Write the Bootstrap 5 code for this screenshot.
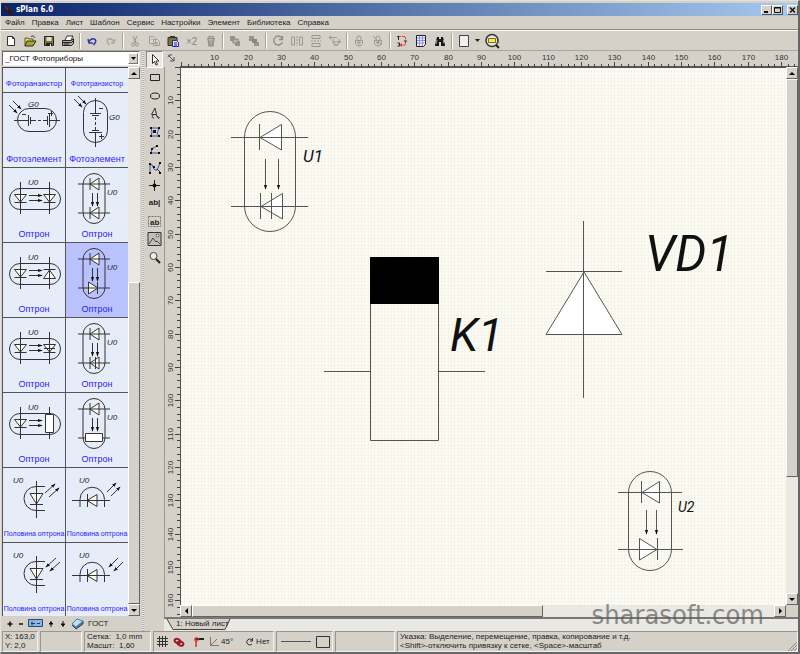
<!DOCTYPE html>
<html lang="ru">
<head>
<meta charset="utf-8">
<meta name="viewport" content="width=device-width, initial-scale=1">
<title>sPlan 6.0</title>
<link rel="stylesheet" href="https://cdn.jsdelivr.net/npm/bootstrap@5.3.0/dist/css/bootstrap.min.css">
<style>
:root{--face:#d5d1c9;--shade:#8b8883;--hi:#fbfaf7}
body{background:var(--face);color:#222;font:8px/10px "Liberation Sans",sans-serif}
button{font:inherit;color:inherit;background:none;border:0;padding:0}
svg{display:block;flex:none}
.app-window{border:1px solid #e4e1da;border-right:2px solid #666;border-bottom:2px solid #666}
.title-strip{height:13px;margin-top:2px;background:linear-gradient(90deg,#0a246a,#a6caf0);color:#fff;font:bold 8px/12px "DejaVu Sans Condensed",sans-serif}
.win-btn{width:11px;height:10px;background:var(--face);border:1px solid;border-color:#fff #555 #555 #fff}
.menu-strip{height:14px;border-bottom:1px solid var(--shade)}
.menu-strip a{color:#222;text-decoration:none;margin-right:7px}
.tool-strip{height:21px;border-top:1px solid var(--hi);border-bottom:1px solid #aaa7a1}
.tool-strip button{width:19px;height:19px}
.tool-strip .narrow-btn{width:9px}
.split-line{width:5px;height:16px;background:linear-gradient(90deg,transparent 2px,#a5a29c 2px,#a5a29c 3px,#fff 3px,#fff 4px,transparent 4px)}
.side-col{width:139px;padding-left:1px}
.combo-wrap{height:15px;border:1px solid;border-color:#666 #eee #eee #666;margin-bottom:1px}
.combo-wrap select{appearance:none;border:0;border-radius:0;background:#fff;font:inherit;color:#111;height:13px;padding:0 14px 0 2px;width:100%;display:block}
.combo-arrow{right:1px;top:1px;width:10px;height:11px;background:var(--face);border:1px solid;border-color:#fff #777 #777 #fff;pointer-events:none}
.lib-grid{display:grid;grid-template-columns:63px 1fr;grid-template-rows:25px;grid-auto-rows:75px;background:#e6edf8;border-top:1px solid #444}
.lib-grid button{border-left:1px solid #555;border-bottom:1px solid #555;color:#2a22ff;display:flex;flex-direction:column;justify-content:flex-end;align-items:center;padding-bottom:2px;overflow:hidden;font-size:9px;line-height:12px;white-space:nowrap}
.lib-grid .label-sm{font-size:7px}
.lib-grid .label-md{font-size:8px}
.lib-grid .picked{background:#b9c2fd}
.lib-grid svg{width:62px;height:60px}
.bar-v{width:12px;background:#e9e8e3}
.bar-h{height:12px;background:#e9e8e3}
.bar-btn{width:12px;height:12px;flex:none}
.raised{background:var(--face);border:1px solid;border-color:#fff #66645f #66645f #fff}
.grip-col{width:6px;background:repeating-linear-gradient(0deg,#aaa 0 1px,#eee 1px 2px) 2px 0/2px 100% no-repeat}
.tools-col{width:18px}
.tools-col button{width:17px;height:18px}
.tools-col .active-tool{background:#ece9e4;border:1px solid;border-color:#888 #fff #fff #888;height:17px}
.sheet-grid{display:grid;grid-template-columns:16px minmax(0,1fr) 12px;grid-template-rows:16px minmax(0,1fr) 12px}
.sheet-grid svg.fit{width:100%;height:100%}
.across{grid-column:2/4}
.ruler-v{grid-row:2/4;border-left:1px solid #999}
.ruler-font text{font:8px "Liberation Sans",sans-serif;fill:#333;text-anchor:middle}
.sheet-view{border-left:1px solid #555;border-top:1px solid #555;background:#fcfcf4}
.part-name{font-family:Roboto,"Liberation Sans",sans-serif;font-style:italic;fill:#111}
.sym-name{font:italic 8px "Liberation Sans",sans-serif;fill:#222;stroke:none}
.tab-strip{height:14px;background:#e9e8e3;border-top:2px solid #777}
.lib-foot{height:15px}
.status-strip{height:21px;padding-left:1px}
.pane{border:1px solid;border-color:#99968f #f4f2ee #f4f2ee #99968f;margin-right:2px;padding-left:2px;line-height:9px;white-space:pre}
.w-pos{width:36px}.w-blank{width:42px}.w-grid{width:67px}.w-snap{width:121px}.w-line{width:57px}.w-gap{width:60px}
.brand-mark{right:34px;bottom:22px;font:27px/30px "DejaVu Sans Condensed","Open Sans",sans-serif;color:rgba(88,88,88,.68)}
</style>
<script src="https://cdn.jsdelivr.net/npm/bootstrap@5.3.0/dist/js/bootstrap.bundle.min.js"></script>
</head>
<body>
<svg width="0" height="0" class="position-absolute" aria-hidden="true">
<defs>
<marker id="tip" viewBox="0 0 6 6" refX="5" refY="3" markerWidth="5" markerHeight="5" markerUnits="userSpaceOnUse" orient="auto"><path d="M0 1L6 3L0 5z" fill="#111"/></marker>
<pattern id="mm" width="10" height="10" patternUnits="userSpaceOnUse"><path d="M.5 0v10M3.5 0v10M7.5 0v10M0 .5h10M0 3.5h10M0 7.5h10" stroke="#f4f4eb" fill="none"/></pattern>
<g id="ledL"><path d="M24 16L33 10V22z" fill="#fffdf0"/><path d="M24 10v12M12 16h32"/></g>
<g id="vcap"><rect x="17" y="5.500" width="22" height="50" rx="11" fill="none"/><use href="#ledL"/><path d="M26.500 25v13" marker-end="url(#tip)"/><path d="M31.500 25v13" marker-end="url(#tip)"/><text x="41" y="27" class="sym-name">U0</text></g>
<g id="ledD"><path d="M11.500 26.500h12L17.500 34z" fill="#fffdf0"/><path d="M11.500 34.500h12M17.500 14v32"/></g>
<g id="hcap"><rect x="6.500" y="20.500" width="51" height="21" rx="10.500" fill="none"/><use href="#ledD"/><path d="M26 27.500h13" marker-end="url(#tip)"/><path d="M26 32.500h13" marker-end="url(#tip)"/><text x="25" y="17" class="sym-name">U0</text></g>
<g id="halfV"><path d="M42 18.500H33A12 12 0 0 0 33 42.500H42M33.500 13v37" fill="none"/><path d="M27 25.500h13L33.500 36z" fill="#fffdf0"/><path d="M27 36.500h13M33.500 13v37"/><text x="10" y="15" class="sym-name">U0</text></g>
<g id="halfH"><path d="M14 39V31.500A12 12 0 0 1 38.500 31.500V39M6 32.500h38" fill="none"/><path d="M21 32.500L31 26.500V38.500z" fill="#fffdf0"/><path d="M21.500 26v13M6 32.500h38"/><text x="13" y="15" class="sym-name">U0</text></g>
</defs>
</svg>

<div class="app-window vh-100 d-flex flex-column overflow-hidden position-relative">
  <header class="title-strip d-flex align-items-center flex-shrink-0">
    <svg width="15" height="12" viewBox="0 0 15 12"><path d="M4 2L11 11" stroke="#35180f" stroke-width="3"/><path d="M4 2L7 6" stroke="#8d4032"/></svg>
    <span class="flex-grow-1">sPlan 6.0</span>
    <button class="win-btn" aria-label="Свернуть"><svg width="9" height="8"><path d="M2 6h4" stroke="#111" stroke-width="2"/></svg></button>
    <button class="win-btn" aria-label="Развернуть"><svg width="9" height="8"><path d="M1.500 1.500h6v5h-6zM1 2h7" stroke="#111" fill="none"/></svg></button>
    <button class="win-btn ms-1" aria-label="Закрыть"><svg width="9" height="8"><path d="M2 1.500l5 5M7 1.500l-5 5" stroke="#111" stroke-width="1.500"/></svg></button>
  </header>
  <nav class="menu-strip d-flex align-items-center flex-shrink-0 ps-1">
    <a href="#">Файл</a><a href="#">Правка</a><a href="#">Лист</a><a href="#">Шаблон</a><a href="#">Сервис</a><a href="#">Настройки</a><a href="#">Элемент</a><a href="#">Библиотека</a><a href="#">Справка</a>
  </nav>
  <div class="tool-strip d-flex align-items-center flex-shrink-0" role="toolbar" id="toolbar">
    <button aria-label="Новый"><svg class="mx-auto" width="14" height="14"><path d="M3.500 2.500h5l2 2v7h-7zM8.500 2.500v2h2" fill="#fff" stroke="#333"/></svg></button>
    <button aria-label="Открыть"><svg class="mx-auto" width="14" height="14"><path d="M2 12V4h3l1 1h4v2" fill="#e6dc72" stroke="#5a5820"/><path d="M2 12l2-5h9l-3 5z" fill="#a8a23a" stroke="#333312"/><path d="M8 3c1-2 3-1 4 1" stroke="#222" fill="none"/></svg></button>
    <button aria-label="Сохранить"><svg class="mx-auto" width="14" height="14"><path d="M2.500 2.500h9v9h-9z" fill="#77772c" stroke="#222"/><path d="M4.500 3h5v4h-5z" fill="#ddd"/><path d="M4 9h6v3H4z" fill="#222"/><path d="M8 10h1v2H8z" fill="#eee"/></svg></button>
    <button aria-label="Печать"><svg class="mx-auto" width="14" height="14"><path d="M4 6l2-4h6l-2 4" fill="#fff" stroke="#333"/><path d="M1.500 6.500h9l2-2v5l-2 2h-9z" fill="#aaa" stroke="#222"/><path d="M2 8.500h8.500l2-2M3 10h5" stroke="#222" fill="none"/></svg></button>
    <span class="split-line"></span>
    <button aria-label="Отменить"><svg class="mx-auto" width="14" height="14"><path d="M3 5l1 4h4M3.500 8.500Q6 4 9 5Q12 6 10 9L8.500 11" fill="none" stroke="#3334aa" stroke-width="1.500"/></svg></button>
    <button aria-label="Вернуть"><svg class="mx-auto" width="14" height="14"><path d="M11 5l-1 4H7M10.500 8.500Q8 4 5 5Q2 6 4 9L5.500 11" fill="none" stroke="#aaa8a3" stroke-width="1.500"/></svg></button>
    <span class="split-line"></span>
    <button aria-label="Вырезать"><svg class="mx-auto" width="14" height="14" fill="none" stroke="#999690"><path d="M5 2l3 7M9 2l-3 7"/><circle cx="5" cy="10.500" r="1.500"/><circle cx="9" cy="10.500" r="1.500"/></svg></button>
    <button aria-label="Копировать"><svg class="mx-auto" width="14" height="14" fill="#ddd9d2" stroke="#a09d97"><path d="M2.500 2.500h4l2 2v5h-6zM6.500 5.500h4l2 2v4h-6zM8 8.500h3M8 10h3M4 5h2"/></svg></button>
    <button aria-label="Вставить"><svg class="mx-auto" width="14" height="14"><path d="M2 3.500h9v8H2z" fill="#77743c" stroke="#33331d"/><path d="M4 2h5v2H4z" fill="#333"/><path d="M6.500 6.500h4l2 2v4h-6z" fill="#dde" stroke="#2828aa"/><path d="M8 9h3M8 11h3" stroke="#2828aa"/></svg></button>
    <button aria-label="Дублировать"><svg class="mx-auto" width="14" height="14"><text x="1" y="11" font-size="10" fill="#888680">×2</text></svg></button>
    <button aria-label="Удалить"><svg class="mx-auto" width="14" height="14" stroke="#908d87" fill="none"><path d="M3 4.500h8M5 4V2.500h4V4M4 5l1 7h4l1-7M6 5.500v6M8 5.500v6" stroke-width="1.200"/></svg></button>
    <span class="split-line"></span>
    <button aria-label="На передний план"><svg class="mx-auto" width="14" height="14"><path d="M2 2h5v5H2zM7 7h5v5H7z" fill="#96938d"/><path d="M5 5h5v4H5z" fill="#b8b5af" stroke="#85827d"/></svg></button>
    <button aria-label="На задний план"><svg class="mx-auto" width="14" height="14"><path d="M2 2h5v5H2zM7 8h5v4H7z" fill="#96938d"/><path d="M5 5h5v4H5z" fill="#8a8781"/></svg></button>
    <span class="split-line"></span>
    <button aria-label="Повернуть"><svg class="mx-auto" width="14" height="14"><path d="M11 4A4.500 4.500 0 1 0 11.500 8M11.500 2v3.500H8" fill="none" stroke="#908d87" stroke-width="1.400"/></svg></button>
    <button aria-label="Отразить по горизонтали"><svg class="mx-auto" width="14" height="14" fill="none" stroke="#9a978f"><path d="M1.500 3v8h3v-8zM12.500 3v8h-3v-8z"/><path d="M7 2v10" stroke-dasharray="2 1"/></svg></button>
    <button aria-label="Отразить по вертикали"><svg class="mx-auto" width="14" height="14" fill="none" stroke="#9a978f"><path d="M3 1.500h8v3H3zM3 12.500h8v-3H3z"/><path d="M2 7h10" stroke-dasharray="2 1"/></svg></button>
    <button aria-label="Выровнять"><svg class="mx-auto" width="14" height="14" fill="none" stroke="#9a978f"><path d="M1 3.500h8M3 2l-2 1.500 2 1.500M5 5v3q0 3 3 3t3-3V5M5 8h8M11 6.500l2 1.500M6 11h4"/></svg></button>
    <span class="split-line"></span>
    <button aria-label="Группировать"><svg class="mx-auto" width="14" height="14" fill="none" stroke="#9a978f"><path d="M5 6V4q0-2 2-2t2 2v2M3.500 6.500h7v3l-2 2.500h-3l-2-2.500zM5 8.500h4M7 6v5"/></svg></button>
    <button aria-label="Разгруппировать"><svg class="mx-auto" width="14" height="14" fill="none" stroke="#9a978f"><path d="M5 6V4q0-2 2-2t2 2v2M3.500 6.500h7v3l-2 2.500h-3l-2-2.500zM5 8.500h4M7 6v5M2 2l9 9"/></svg></button>
    <span class="split-line"></span>
    <button aria-label="Нумерация"><svg class="mx-auto" width="14" height="14" fill="none"><path d="M3 2.500h7.500v3M10.500 7v4H6" stroke="#e33" stroke-dasharray="3 1"/><path d="M2 2.500h2M3.500 2v4M2.500 9h2v3h-2M9 7h3" stroke="#222"/><path d="M7 9l-2.500 2L7 13z" fill="#e33"/></svg></button>
    <button aria-label="Список"><svg class="mx-auto" width="14" height="14"><path d="M2.500 1.500h9v9l-2 2h-7z" fill="#eef" stroke="#222"/><path d="M3 4h8M3 6.500h8M3 9h7M5.500 2v10M8.500 2v10" stroke="#8a92ee"/></svg></button>
    <button aria-label="Поиск"><svg class="mx-auto" width="14" height="14"><path d="M4 3h2v2h2V3h2l2 8v1H8V8H6v4H2v-1z" fill="#181818"/><path d="M4 6l-1 4M10.500 6v3" stroke="#999"/></svg></button>
    <span class="split-line"></span>
    <button aria-label="Страница"><svg class="mx-auto" width="14" height="14"><path d="M2.500 1.500h9v11h-9z" fill="#f0f0ee" stroke="#444"/></svg></button>
    <button class="narrow-btn" aria-label="Выбор страницы"><svg class="mx-auto" width="5" height="4"><path d="M0 0h5L2.500 3z" fill="#222"/></svg></button>
    <button aria-label="Масштаб"><svg class="mx-auto" width="16" height="16"><circle cx="8" cy="7.500" r="6" fill="#e4e4dd" stroke="#333" stroke-width="1.500"/><path d="M4.500 5.500h7v4h-7z" fill="#f4ec55" stroke="#77711b"/><path d="M12 12l3 3" stroke="#222" stroke-width="2"/></svg></button>
  </div>

  <main class="d-flex flex-grow-1 overflow-hidden">
    <aside class="side-col d-flex flex-column flex-shrink-0">
      <div class="combo-wrap position-relative flex-shrink-0">
        <select aria-label="Библиотека"><option>_ГОСТ Фотоприборы</option></select>
        <span class="combo-arrow position-absolute d-flex align-items-center justify-content-center"><svg width="5" height="3"><path d="M0 0h5L2.500 3z"/></svg></span>
      </div>
      <div class="d-flex flex-grow-1 overflow-hidden">
        <div class="lib-grid flex-grow-1 overflow-hidden" id="parts">
          <button class="label-md">Фоторанзистор</button>
          <button class="label-sm">Фототранзистор</button>
          <button><svg fill="none" stroke="#333"><rect x="14.500" y="15.500" width="39" height="23" rx="11.500"/><path d="M11 27.500h14M28 27.500h2M47 27.500h10M42 27.500h3M25.500 22v11M27.500 24v7M44.500 23v9M46.500 21v13M19 21.500h4M45 20.500h5M48.500 18v5"/><path d="M30 27.500h12" stroke-dasharray="3 2"/><path d="M10 8l8 8" marker-end="url(#tip)"/><path d="M6 12l8 8" marker-end="url(#tip)"/><text x="25" y="14" class="sym-name">G0</text></svg>Фотоэлемент</button>
          <button><svg fill="none" stroke="#333"><rect x="17.500" y="7.500" width="24" height="42" rx="12"/><path d="M29.500 5v15M24 20.500h11M26 22.500h7M26 37.500h7M23 39.500h13M29.500 39v15M33 15.500h4M33 43.500h5M35.500 41v5"/><path d="M29.500 24v13" stroke-dasharray="3 2"/><path d="M12 3l8 8" marker-end="url(#tip)"/><path d="M8 6l8 8" marker-end="url(#tip)"/><text x="43" y="27" class="sym-name">G0</text></svg>Фотоэлемент</button>
          <button><svg fill="none" stroke="#333"><use href="#hcap"/><use href="#ledD" x="29"/></svg>Оптрон</button>
          <button><svg fill="none" stroke="#333"><use href="#vcap"/><use href="#ledL" y="29"/></svg>Оптрон</button>
          <button><svg fill="none" stroke="#333"><use href="#hcap"/><path d="M40.500 35.500h12L46.500 27z" fill="#fffdf0"/><path d="M40.500 26.500h12M46.500 14v32"/></svg>Оптрон</button>
          <button class="picked"><svg fill="none" stroke="#333"><use href="#vcap"/><path d="M22.500 39v12L32 45z" fill="#fffdf0"/><path d="M31.500 39v12M12 45h32"/></svg>Оптрон</button>
          <button><svg fill="none" stroke="#333"><use href="#hcap"/><use href="#ledD" x="29"/><path d="M41 30.500h11"/></svg>Оптрон</button>
          <button><svg fill="none" stroke="#333"><use href="#vcap"/><use href="#ledL" y="29"/><path d="M29.500 39v12"/></svg>Оптрон</button>
          <button><svg fill="none" stroke="#333"><use href="#hcap"/><path d="M46.500 14v32"/><path d="M42.500 21.500h8v18h-8z" fill="#fff"/></svg>Оптрон</button>
          <button><svg fill="none" stroke="#333"><use href="#vcap"/><path d="M12 45h32"/><path d="M19.500 40.500h17v8h-17z" fill="#fff"/></svg>Оптрон</button>
          <button class="label-sm"><svg fill="none" stroke="#333"><use href="#halfV"/><path d="M42 25l10-9" marker-end="url(#tip)"/><path d="M46 29l10-9" marker-end="url(#tip)"/></svg>Половина оптрона</button>
          <button class="label-sm"><svg fill="none" stroke="#333"><use href="#halfH"/><path d="M41 24l9-9" marker-end="url(#tip)"/><path d="M45 28l9-9" marker-end="url(#tip)"/></svg>Половина оптрона</button>
          <button class="label-sm"><svg fill="none" stroke="#333"><use href="#halfV"/><path d="M53 15l-10 9" marker-end="url(#tip)"/><path d="M57 19l-10 9" marker-end="url(#tip)"/></svg>Половина оптрона</button>
          <button class="label-sm"><svg fill="none" stroke="#333"><use href="#halfH"/><path d="M52 15l-9 9" marker-end="url(#tip)"/><path d="M57 19l-9 9" marker-end="url(#tip)"/></svg>Половина оптрона</button>
        </div>
        <div class="bar-v d-flex flex-column flex-shrink-0">
          <button class="bar-btn raised" aria-label="Вверх"><svg class="mx-auto" width="6" height="3"><path d="M0 3h6L3 0z"/></svg></button>
          <div style="height:37%"></div>
          <div class="raised flex-grow-1"></div>
          <button class="bar-btn raised" aria-label="Вниз"><svg class="mx-auto" width="6" height="3"><path d="M0 0h6L3 3z"/></svg></button>
        </div>
      </div>
      <div class="lib-foot d-flex align-items-center flex-shrink-0">
        <button class="ps-1" aria-label="Добавить"><svg width="8" height="8"><path d="M4 1.500v5M1.500 4h5" stroke="#111" stroke-width="1.500"/></svg></button>
        <button class="ps-1" aria-label="Убрать"><svg width="6" height="8"><path d="M1 4h4" stroke="#111" stroke-width="1.500"/></svg></button>
        <button class="ps-1" aria-label="Переименовать"><svg width="15" height="9"><path d="M.5.500h14v7H.5z" fill="#8db4dc" stroke="#234a7c"/><path d="M3 4.500h4M9 4.500h3M4 2.500v4" stroke="#1c3d69"/></svg></button>
        <button class="ps-1" aria-label="Выше"><svg width="8" height="8"><path d="M4 1v6M2 4l2-2 2 2z" stroke="#111"/></svg></button>
        <button class="ps-1" aria-label="Ниже"><svg width="8" height="8"><path d="M4 1v6M2 4l2 2 2-2z" stroke="#111"/></svg></button>
        <svg class="ms-1" width="13" height="13"><path d="M1 8l4 4 7-5V4L5 9z" fill="#4c7cae" stroke="#345"/><path d="M1 7l5-5 6 2-7 6z" fill="#bfe0f5" stroke="#4d7ca6"/></svg>
        <span class="ps-1">ГОСТ</span>
      </div>
    </aside>
    <div class="grip-col flex-shrink-0"></div>
    <div class="tools-col flex-shrink-0 d-flex flex-column" role="toolbar">
      <button class="active-tool" aria-label="Указка"><svg class="mx-auto" width="13" height="13"><path d="M4.500 1.500v9l2-2 1.500 3.500 1.500-.5L8 8h3z" fill="#fff" stroke="#333"/></svg></button>
      <button aria-label="Прямоугольник"><svg class="mx-auto" width="13" height="13"><path d="M2.500 3.500h9v6h-9z" fill="none" stroke="#222"/></svg></button>
      <button aria-label="Эллипс"><svg class="mx-auto" width="13" height="13"><ellipse cx="7" cy="7" rx="4.500" ry="3" fill="none" stroke="#222"/></svg></button>
      <button aria-label="Фигура"><svg class="mx-auto" width="13" height="13" fill="none" stroke="#333"><path d="M7 1L3.500 7.500h5zM5 8q-2 3 1 3M8 8l3 4M8.500 9q2 0 3 2"/></svg></button>
      <button aria-label="Многоугольник"><svg class="mx-auto" width="13" height="13"><path d="M3 3h6l2 1-2 4 2 3H3l1-4z" fill="none" stroke="#4450a0"/><path d="M2 2h2v2H2zM10 2h2v2h-2zM2 10h2v2H2zM10 10h2v2h-2zM5 5h3v3H5z" fill="#111"/></svg></button>
      <button aria-label="Линия"><svg class="mx-auto" width="13" height="13"><path d="M9 3L4 5.500 3 10h8" fill="none" stroke="#4450a0"/><path d="M8 2h2v2H8zM3 5h2v2H3zM2 9h2v2H2zM10 9h2v2h-2z" fill="#111"/></svg></button>
      <button aria-label="Кривая"><svg class="mx-auto" width="13" height="13"><path d="M2 12V4q2-2 3 2t4 3l3-7" fill="none" stroke="#4450a0"/><path d="M1 2h2v2H1zM11 1h2v2h-2zM1 11h2v2H1zM11 11h2v2h-2zM5 5h2v2H5z" fill="#111"/><path d="M9 8l3 3" stroke="#222"/></svg></button>
      <button aria-label="Узел"><svg class="mx-auto" width="13" height="13"><path d="M1 6.500h11M6.500 1v11" stroke="#222"/><circle cx="6.500" cy="6.500" r="2" fill="#111"/></svg></button>
      <button class="fw-bold">ab|</button>
      <button class="fw-bold"><svg class="mx-auto" width="15" height="13"><path d="M1.500 1.500h12v10h-12z" fill="none" stroke="#777" stroke-dasharray="2 1"/><text x="3" y="10" font-size="8" fill="#222">ab</text></svg></button>
      <button aria-label="Рисунок"><svg class="mx-auto" width="15" height="14"><path d="M1 .5h13v13H1z" fill="#c3c0b9" stroke="#333"/><path d="M2 12l4-6 3 4 1-1 3 3" fill="none" stroke="#444"/><circle cx="10.500" cy="3.500" r="1.500" fill="#eee" stroke="#555"/></svg></button>
      <button aria-label="Лупа"><svg class="mx-auto" width="13" height="13"><circle cx="5.500" cy="5" r="3.500" fill="#e8f0f0" stroke="#444"/><path d="M8 8l4 4" stroke="#222" stroke-width="2"/></svg></button>
    </div>

    <section class="flex-grow-1 d-flex flex-column overflow-hidden">
      <div class="sheet-grid flex-grow-1 overflow-hidden">
        <svg width="16" height="16"><path d="M4 4l6 6M4 6l1-2h3M10 6v4H6" stroke="#555" fill="none"/></svg>
        <svg class="fit ruler-font across" id="rulerX"></svg>
        <svg class="fit ruler-font ruler-v" id="rulerY"></svg>
        <div class="sheet-view overflow-hidden">
          <svg class="fit" fill="none" stroke="#555">
            <rect width="100%" height="100%" fill="url(#mm)" stroke="none"/>
            <g transform="translate(-181 -68)">
              <rect x="244.500" y="111.500" width="51" height="120" rx="25.500"/>
              <path d="M260 137.500L281.500 124.500V150z" fill="#fff"/><path d="M231 137.500h77M259.500 124v26"/>
              <path d="M265.500 159v30" marker-end="url(#tip)"/><path d="M278.500 159v30" marker-end="url(#tip)"/>
              <path d="M261 206.500L282.500 193.500V219z" fill="#fff"/><path d="M231 206.500h77M260.500 193v26M271.500 193v26"/>
              <path d="M370.500 257.500h68v183h-68z"/><path d="M370 257h69v47h-69z" fill="#000" stroke="none"/><path d="M324 371.500h46M439 371.500h46"/>
              <path d="M584 272L546 334.500h76z" fill="#fff"/><path d="M583.500 221v177M546 271.500h76"/>
              <rect x="628.500" y="471.500" width="43" height="99" rx="21.500"/>
              <path d="M642 492.500L659.500 481.500V503z" fill="#fff"/><path d="M618 492.500h64M641.500 481v22"/>
              <path d="M646.500 510v24" marker-end="url(#tip)"/><path d="M656.500 510v24" marker-end="url(#tip)"/>
              <path d="M657 549.500L639.500 538.500V560z" fill="#fff"/><path d="M618 549.500h65M657.500 538v22"/>
              <g class="part-name" stroke="none"><text x="303" y="162" font-size="17">U1</text><text x="450" y="351" font-size="46">K1</text><text x="645" y="271" font-size="49">VD1</text><text x="678" y="512" font-size="14">U2</text></g>
            </g>
          </svg>
        </div>
        <div class="bar-v d-flex flex-column">
          <button class="bar-btn raised" aria-label="Прокрутить вверх"><svg class="mx-auto" width="6" height="3"><path d="M0 3h6L3 0z"/></svg></button>
          <div class="raised" style="height:74%"></div>
          <div class="flex-grow-1"></div>
          <button class="bar-btn raised" aria-label="Прокрутить вниз"><svg class="mx-auto" width="6" height="3"><path d="M0 0h6L3 3z"/></svg></button>
        </div>
        <div class="bar-h d-flex">
          <button class="bar-btn raised" aria-label="Влево"><svg class="mx-auto" width="3" height="6"><path d="M3 0v6L0 3z"/></svg></button>
          <div class="raised" style="width:58%"></div>
          <div class="flex-grow-1"></div>
          <button class="bar-btn raised" aria-label="Вправо"><svg class="mx-auto" width="3" height="6"><path d="M0 0v6L3 3z"/></svg></button>
        </div>
        <span></span>
      </div>
      <div class="tab-strip flex-shrink-0 position-relative">
        <svg class="position-absolute top-0 start-0" width="70" height="12"><path d="M0 0h3l6 11h52l5-11h4-70z" fill="#d5d1c9"/><path d="M3 0l6 10.500h52L66 0" stroke="#444" fill="none"/></svg>
        <button class="position-relative ms-2 ps-1">1: Новый лист</button>
      </div>
    </section>
  </main>

  <footer class="status-strip d-flex flex-shrink-0">
    <div class="pane w-pos flex-shrink-0">X: 163,0
Y: 2,0</div>
    <div class="pane w-blank flex-shrink-0"></div>
    <div class="pane w-grid flex-shrink-0">Сетка:  1,0 mm
Масшт:  1,60</div>
    <div class="pane w-snap flex-shrink-0 d-flex align-items-center">
      <button aria-label="Сетка"><svg width="13" height="13"><path d="M1 3.500h11M1 6.500h11M1 9.500h11M3.500 1v11M6.500 1v11M9.500 1v11" stroke="#333"/></svg></button>
      <button class="ms-1" aria-label="Привязка"><svg width="12" height="12" fill="none" stroke="#a01820" stroke-width="2"><ellipse cx="4.500" cy="5" rx="3" ry="2" transform="rotate(25 4.500 5)"/><ellipse cx="7.500" cy="7.500" rx="3" ry="2" transform="rotate(25 7.500 7.500)"/></svg></button>
      <button class="ms-2" aria-label="Угол"><svg width="12" height="12"><path d="M2 3h9" stroke="#222" stroke-width="2"/><path d="M3 2v9" stroke="#c33" stroke-width="1.500"/><circle cx="3.500" cy="3.500" r="2" fill="none" stroke="#e33"/></svg></button>
      <button class="ms-1 d-flex align-items-center"><svg width="12" height="11"><path d="M1.500 1v8.500H10M2 9l6-6" stroke="#777" fill="none"/></svg>45°</button>
      <button class="ms-2 ps-1 d-flex align-items-center"><svg width="11" height="10"><path d="M7 3A3 3 0 1 0 7 7M7.500 1v3H5" stroke="#333" fill="none"/></svg>Нет</button>
    </div>
    <div class="pane w-line flex-shrink-0 d-flex align-items-center justify-content-around"><svg width="30" height="3"><path d="M0 1.500h30" stroke="#555"/></svg><svg width="14" height="12"><path d="M.5.500h13v11H.5z" stroke="#333" fill="none"/></svg></div>
    <div class="pane w-gap flex-shrink-0"></div>
    <div class="pane flex-grow-1 d-flex justify-content-between me-0"><span>Указка: Выделение, перемещение, правка, копирование и т.д.
&lt;Shift&gt;-отключить привязку к сетке, &lt;Space&gt;-масштаб</span><svg class="mt-auto" width="11" height="11"><path d="M2 11l9-9M5 11l6-6M8 11l3-3" stroke="#888"/></svg></div>
  </footer>
  <div class="brand-mark position-absolute">sharasoft.com</div>
</div>
<script>
// Rulers: one tick every 2 mm, a number every 10 mm.
const MM = 10 / 3;
function drawRulers() {
  const rx = document.getElementById('rulerX'), ry = document.getElementById('rulerY');
  const w = rx.clientWidth, h = ry.clientHeight;
  let out = `<path d="M0 15.5H${w}" stroke="#555"/>`;
  for (let m = 0; m * MM + 1 < w; m += 2) {
    const x = Math.round(m * MM + 1) + .5, big = m % 10 === 0;
    out += `<path d="M${x} ${big ? 11 : 13}V16" stroke="#444"/>`;
    if (big && m && x + 8 < w) out += `<text x="${x}" y="9">${m}</text>`;
  }
  rx.innerHTML = out;
  out = '';
  for (let m = 0; m * MM < h; m += 2) {
    const y = Math.round(m * MM) + .5, big = m % 10 === 0;
    out += `<path d="M${big ? 10 : 12} ${y}H15" stroke="#444"/>`;
    if (big && m && y + 8 < h) out += `<text transform="translate(8 ${y}) rotate(-90)">${m}</text>`;
  }
  ry.innerHTML = out;
}
drawRulers();
addEventListener('resize', drawRulers);
</script>
</body>
</html>
